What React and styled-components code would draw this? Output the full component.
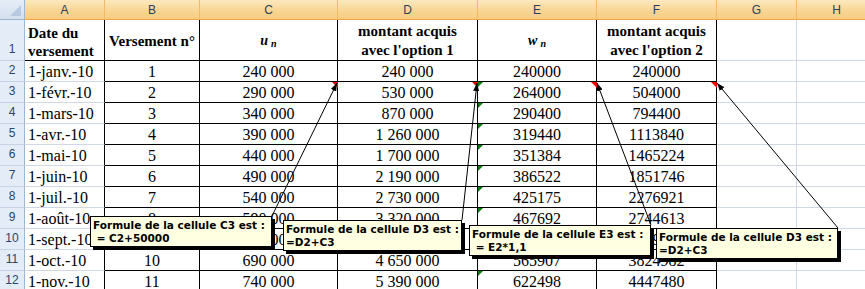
import { Fragment } from "react";
import styled, { createGlobalStyle, css } from "styled-components";

const GlobalStyle = createGlobalStyle`
    html, body { margin: 0; padding: 0; background: #fff; }
    body { overflow: hidden; }
`;

const Window = styled.div`
    position: relative;
    width: 865px;
    height: 289px;
    overflow: hidden;
    background: #fff;
`;

const Sheet = styled.div`
    display: grid;
    grid-template-columns: 25px 80px 95px 138px 140px 119px 120px 80px 80px;
    grid-template-rows: 20px 41px repeat(11, 21px);
`;

const Corner = styled.div`
    position: relative;
    box-sizing: border-box;
    background: linear-gradient(#e6edf7, #d3dfef);
    border-right: 1px solid #9eb6ce;
    border-bottom: 1px solid #9eb6ce;
    &::after {
        content: "";
        position: absolute;
        right: 3px;
        bottom: 3px;
        border-bottom: 11px solid #b7c9e2;
        border-left: 11px solid transparent;
    }
`;

const ColHead = styled.div`
    box-sizing: border-box;
    display: flex;
    align-items: center;
    justify-content: center;
    background: linear-gradient(#fde9bf, #f9d595 55%, #f7cd80);
    border-right: 1px solid #f2b967;
    border-bottom: 1px solid #f0a445;
    font-family: "Liberation Sans", Arial, sans-serif;
    font-size: 12px;
    color: #27415f;
`;

const RowHead = styled.div`
    box-sizing: border-box;
    display: flex;
    align-items: flex-end;
    justify-content: center;
    padding-bottom: 2px;
    background: #e4ecf7;
    border-right: 1px solid #9eb6ce;
    border-bottom: 1px solid #c5d3e5;
    font-family: "Liberation Sans", Arial, sans-serif;
    font-size: 12px;
    line-height: 17px;
    color: #2c4566;
`;

const Cell = styled.div`
    position: relative;
    box-sizing: border-box;
    display: flex;
    align-items: flex-end;
    justify-content: ${p => p.$align || "center"};
    padding: 0 3px;
    border-right: 1px solid ${p => p.$right || "#000"};
    border-bottom: 1px solid ${p => p.$bottom || "#000"};
    font-family: "Liberation Serif", "Times New Roman", serif;
    font-size: 16px;
    line-height: 19px;
    color: #000;
    white-space: nowrap;
    ${p => p.$comment && css`
        &::after {
            content: "";
            position: absolute;
            top: 0;
            right: -1px;
            border-top: 6px solid #ff0000;
            border-left: 6px solid transparent;
        }
    `}
    ${p => p.$warn && css`
        &::before {
            content: "";
            position: absolute;
            top: 0;
            left: 0;
            border-top: 5px solid #008000;
            border-right: 5px solid transparent;
        }
    `}
`;

const HeadCell = styled(Cell)`
    align-items: ${p => p.$bottomAlign ? "flex-end" : "center"};
    padding-top: 2px;
    padding-left: ${p => p.$align === "flex-start" ? "3px" : "1px"};
    padding-right: 1px;
    font-weight: bold;
    font-size: 15px;
    white-space: normal;
    text-align: ${p => p.$align === "flex-start" ? "left" : "center"};
    line-height: ${p => p.$bottomAlign ? "18px" : "19px"};
`;

const MathVar = styled.span`
    font-style: italic;
    font-weight: bold;
    font-size: 14px;
    sub {
        font-size: 10px;
        vertical-align: baseline;
        position: relative;
        top: 2px;
        margin-left: 3px;
    }
`;

const Overlay = styled.svg`
    position: absolute;
    left: 0;
    top: 0;
    pointer-events: none;
`;

const Note = styled.div`
    position: absolute;
    left: ${p => p.$x}px;
    top: ${p => p.$y}px;
    width: ${p => p.$w}px;
    height: 31px;
    box-sizing: border-box;
    padding: 2px 2px;
    background: #ffffe1;
    border: 1px solid #000;
    box-shadow: 3px 3px 0 #000;
    font-family: "DejaVu Sans", Tahoma, Verdana, sans-serif;
    font-weight: bold;
    font-size: 10.5px;
    line-height: 13px;
    color: #000;
    white-space: pre;
`;

const months = ["janv.", "févr.", "mars", "avr.", "mai", "juin", "juil.", "août", "sept.", "oct.", "nov."];
const cVals = ["240 000", "290 000", "340 000", "390 000", "440 000", "490 000", "540 000", "590 000", "640 000", "690 000", "740 000"];
const dVals = ["240 000", "530 000", "870 000", "1 260 000", "1 700 000", "2 190 000", "2 730 000", "3 320 000", "3 960 000", "4 650 000", "5 390 000"];
const eVals = ["240000", "264000", "290400", "319440", "351384", "386522", "425175", "467692", "514461", "565907", "622498"];
const fVals = ["240000", "504000", "794400", "1113840", "1465224", "1851746", "2276921", "2744613", "3259074", "3824982", "4447480"];

const notes = [
    { x: 90, y: 216, w: 182, text: "Formule de la cellule C3 est :\n = C2+50000", from: [272, 216], to: [337, 83] },
    { x: 283, y: 220, w: 179, text: "Formule de la cellule D3 est :\n=D2+C3", from: [462, 220], to: [477, 83] },
    { x: 469, y: 225, w: 182, text: "Formule de la cellule E3 est :\n = E2*1,1", from: [651, 225], to: [597, 83] },
    { x: 656, y: 228, w: 182, text: "Formule de la cellule D3 est :\n=D2+C3", from: [838, 228], to: [717, 83] },
];

const grid = "#d0d7e5";

export default function App() {
    return (
        <Window>
            <GlobalStyle />
            <Sheet>
                <Corner />
                {["A", "B", "C", "D", "E", "F", "G", "H"].map(l => (
                    <ColHead key={l}>{l}</ColHead>
                ))}

                <RowHead>1</RowHead>
                <HeadCell $align="flex-start" $bottomAlign>Date du<br />versement</HeadCell>
                <HeadCell>Versement n°</HeadCell>
                <HeadCell><MathVar>u<sub>n</sub></MathVar></HeadCell>
                <HeadCell>montant acquis<br />avec l'option 1</HeadCell>
                <HeadCell><MathVar>w<sub>n</sub></MathVar></HeadCell>
                <HeadCell>montant acquis<br />avec l'option 2</HeadCell>
                <Cell $right={grid} $bottom={grid} />
                <Cell $right={grid} $bottom={grid} />

                {months.map((m, i) => (
                    <Fragment key={m}>
                        <RowHead>{i + 2}</RowHead>
                        <Cell $align="flex-start" $bottom={grid}>1-{m}-10</Cell>
                        <Cell>{i + 1}</Cell>
                        <Cell $comment={i === 1}>{cVals[i]}</Cell>
                        <Cell $comment={i === 1}>{dVals[i]}</Cell>
                        <Cell $comment={i === 1} $warn={i > 0}>{eVals[i]}</Cell>
                        <Cell $comment={i === 1}>{fVals[i]}</Cell>
                        <Cell $right={grid} $bottom={grid} />
                        <Cell $right={grid} $bottom={grid} />
                    </Fragment>
                ))}
            </Sheet>

            <Overlay width="865" height="289" viewBox="0 0 865 289">
                <defs>
                    <marker id="arrow" markerUnits="userSpaceOnUse" markerWidth="8" markerHeight="6" refX="8" refY="3" orient="auto">
                        <path d="M0,0 L8,3 L0,6 Z" fill="#000" />
                    </marker>
                </defs>
                {notes.map((n, i) => (
                    <line key={i} x1={n.from[0]} y1={n.from[1]} x2={n.to[0]} y2={n.to[1]}
                        stroke="#000" strokeWidth="1" markerEnd="url(#arrow)" />
                ))}
            </Overlay>

            {notes.map((n, i) => (
                <Note key={i} $x={n.x} $y={n.y} $w={n.w}>{n.text}</Note>
            ))}
        </Window>
    );
}
